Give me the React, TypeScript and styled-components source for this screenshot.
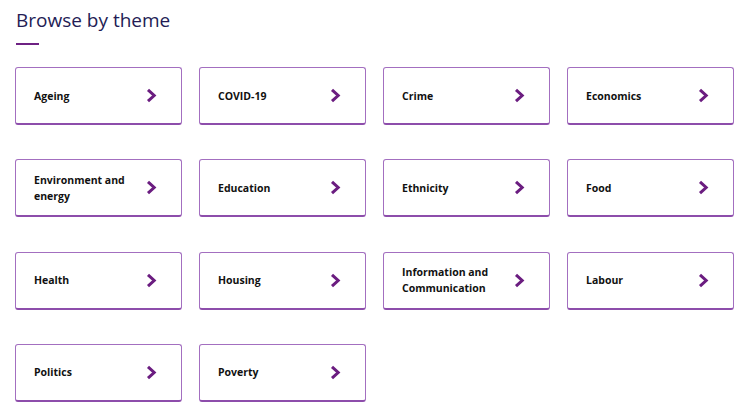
import React from 'react';
import styled, { createGlobalStyle } from 'styled-components';

const GlobalStyle = createGlobalStyle`
  body {
    margin: 0;
    background: #ffffff;
    font-family: 'Open Sans', 'Liberation Sans', sans-serif;
  }
`;

const Container = styled.section`
  padding: 6px 23px 0 15px;
`;

const Title = styled.h2`
  margin: 0 0 0 1px;
  font-size: 19px;
  font-weight: 400;
  line-height: 28px;
  color: #231c55;
`;

const Rule = styled.div`
  width: 23px;
  height: 2px;
  margin: 9px 0 0 1px;
  background: #6e2183;
`;

const Grid = styled.div`
  margin-top: 22px;
  display: grid;
  grid-template-columns: repeat(4, 167px);
  grid-auto-rows: 58px;
  column-gap: 17px;
  row-gap: 34.3px;
`;

const Card = styled.a`
  display: flex;
  align-items: center;
  justify-content: space-between;
  box-sizing: border-box;
  padding: 0 24px 0 18px;
  border: 1px solid #a36fc0;
  border-bottom: 2px solid #8d4dab;
  border-radius: 3px;
  text-decoration: none;
  cursor: pointer;
  span {
    font-size: 10.5px;
    font-weight: 700;
    line-height: 16px;
    color: #111111;
    max-width: 100px;
  }
  svg {
    flex-shrink: 0;
  }
`;

const themes = [
  'Ageing',
  'COVID-19',
  'Crime',
  'Economics',
  'Environment and energy',
  'Education',
  'Ethnicity',
  'Food',
  'Health',
  'Housing',
  'Information and Communication',
  'Labour',
  'Politics',
  'Poverty',
];

const Chevron = () => (
  <svg width="11" height="15" viewBox="0 0 11 15">
    <path
      d="M2 1.8 L8.2 7.5 L2 13.2"
      fill="none"
      stroke="#6b1d80"
      strokeWidth="3"
      strokeLinejoin="miter"
    />
  </svg>
);

export default function App(): JSX.Element {
  return (
    <>
      <GlobalStyle />
      <Container>
        <Title>Browse by theme</Title>
        <Rule />
        <Grid>
          {themes.map((t) => (
            <Card key={t}>
              <span>{t}</span>
              <Chevron />
            </Card>
          ))}
        </Grid>
      </Container>
    </>
  );
}
